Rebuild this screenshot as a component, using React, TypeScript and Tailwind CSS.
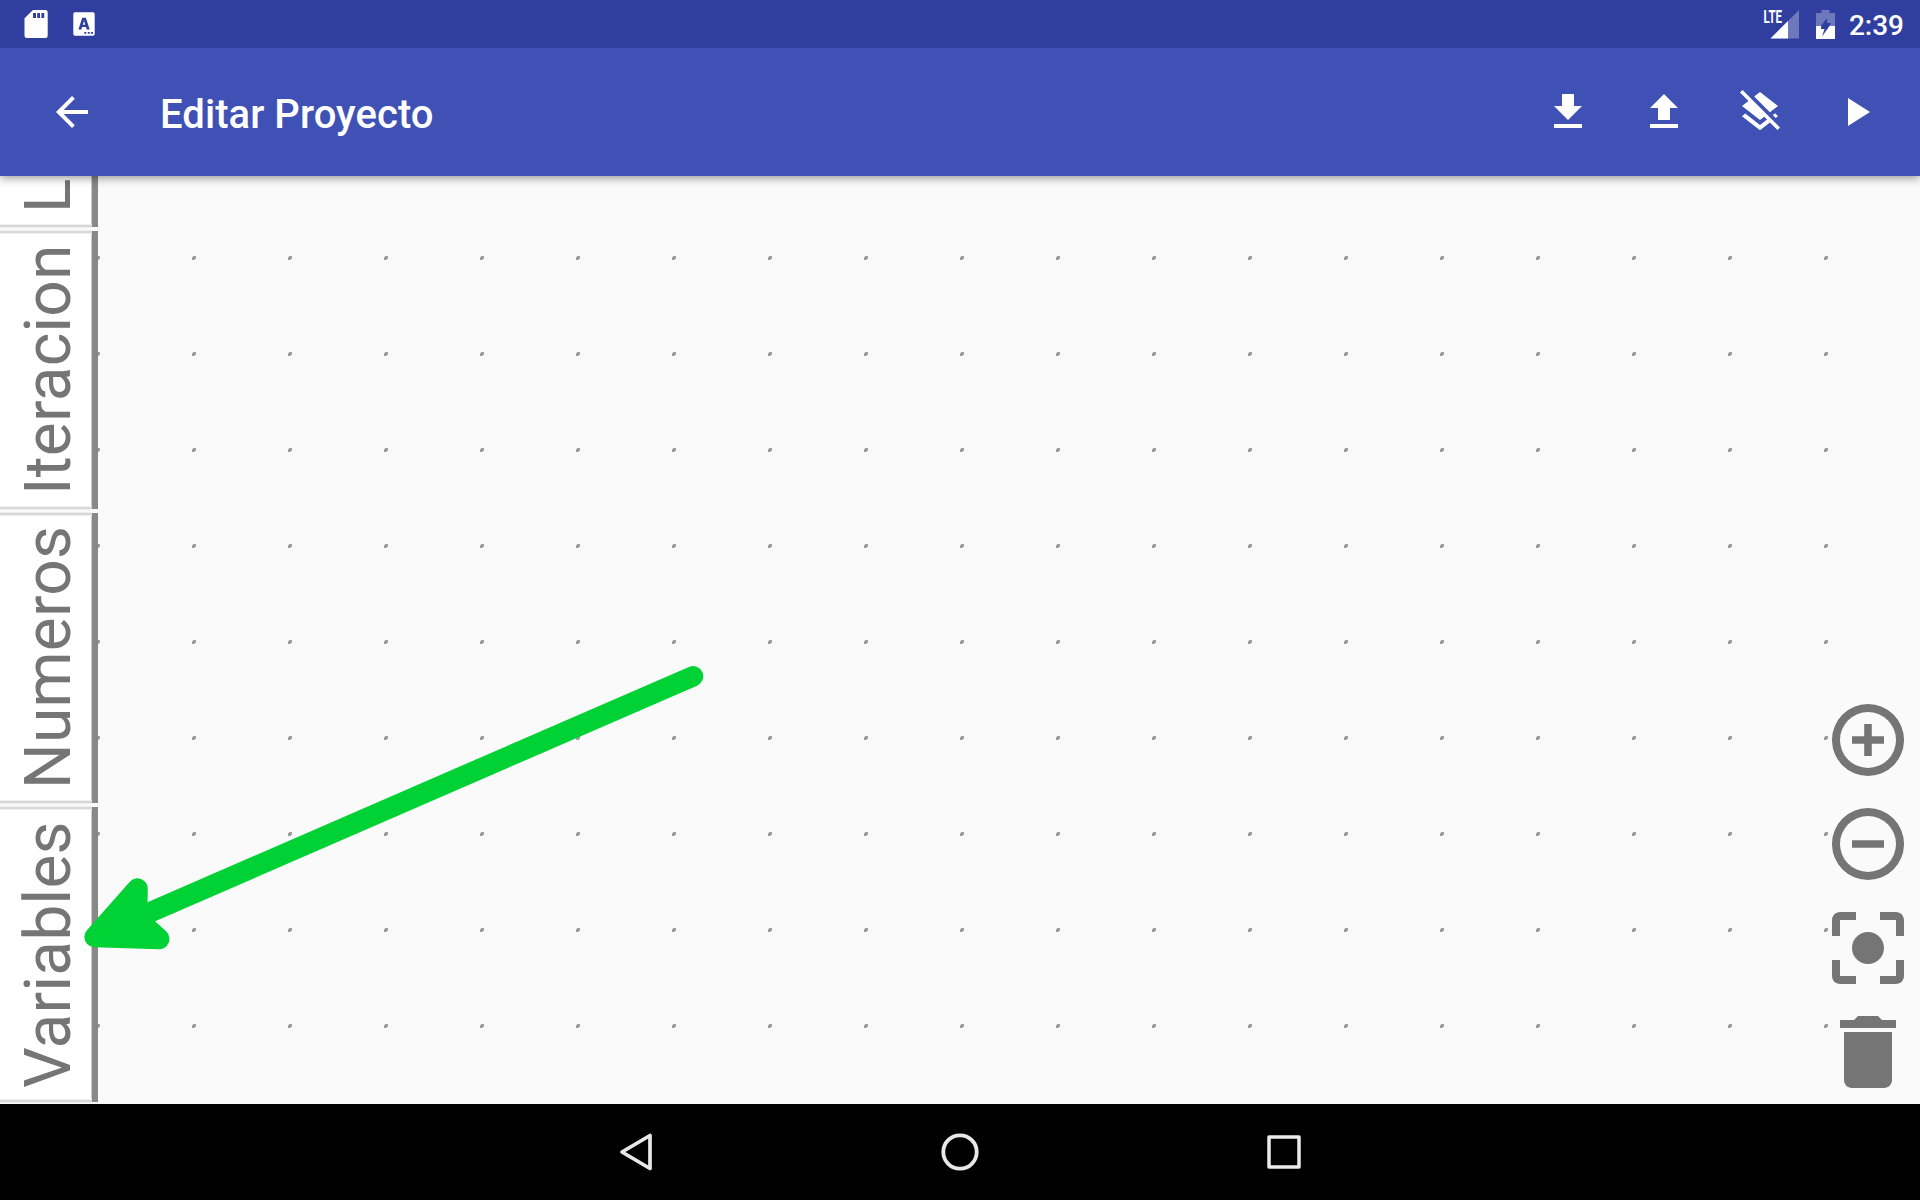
import type { ReactNode } from "react";

const tabs = [
  { label: "Variables", size: "h-[295px]" },
  { label: "Numeros", size: "h-[290px]" },
  { label: "Iteracion", size: "h-[278px]" },
  { label: "Logica", size: "h-[212px]" },
];

function ActionIcon({ d }: { d: string }) {
  return (
    <button className="flex h-24 w-24 items-center justify-center">
      <svg viewBox="0 0 24 24" className="h-12 w-12 fill-white">
        <path d={d} />
      </svg>
    </button>
  );
}

function CanvasButton({ children }: { children: ReactNode }) {
  return (
    <button className="h-[72px] w-[72px]">
      <svg viewBox="3 3 18 18" className="h-[72px] w-[72px] fill-[#757575]">
        {children}
      </svg>
    </button>
  );
}

function StatusBar() {
  return (
    <div className="relative z-30 flex h-12 items-center justify-between bg-[#303f9f] pr-4 pl-6">
      <div className="flex items-center gap-[25px]">
        <svg width="24" height="28" viewBox="0 0 24 28" className="fill-white">
          <path
            fillRule="evenodd"
            d="M9 0h12.500a2.200 2.200 0 0 1 2.200 2.200v23.600a2.200 2.200 0 0 1-2.200 2.200H2.700a2.200 2.200 0 0 1-2.200-2.200V8.300zM9 3v5h3V3zM13.200 3v5h2.800V3zM17.400 3v5h2.800V3z"
          />
        </svg>
        <svg width="22" height="24" viewBox="0 0 22 24" className="fill-white">
          <path
            fillRule="evenodd"
            d="M2 .3h18a1.700 1.700 0 0 1 1.700 1.700v20a1.700 1.700 0 0 1-1.700 1.700H2A1.700 1.700 0 0 1 .3 22V2A1.700 1.700 0 0 1 2 .3zM9.200 5.700L5.400 17.500h3l.8-2.500h3.800l.8 2.500h2.900L12.900 5.700zM11 8.800l1.200 3.900H9.900zM11.300 20v1.800h2V20zM14.800 20v1.800h2V20zM18 20v1.800h2V20z"
          />
        </svg>
      </div>
      <div className="flex items-center">
        <svg width="36" height="29" viewBox="0 0 36 29" className="mr-4 overflow-visible fill-white">
          <path d="M35 0v28.500H6.500z" fillOpacity=".3" />
          <path d="M24 11v17.500H6.500z" />
          <text x="-0.500" y="13" textLength="18.500" lengthAdjust="spacingAndGlyphs" className="font-['Roboto'] text-[18px] font-bold">
            LTE
          </text>
        </svg>
        <svg width="20" height="29" viewBox="0 0 20 29" className="fill-white">
          <path
            fillRule="evenodd"
            fillOpacity=".3"
            d="M5.500 0h8v3H19v13h-5.500l1.500-3h-4V8L5 16H0V3h5.500z"
          />
          <path fillRule="evenodd" d="M0 16h5.200l-.2 3h3.500L6 26.500 13.500 16H19v13H0z" />
        </svg>
        <span className="ml-[13px] pt-[3px] text-[28px] leading-8 font-medium text-white">2:39</span>
      </div>
    </div>
  );
}

function AppBar() {
  return (
    <header className="relative z-20 flex h-32 items-center bg-[#3f51b5] pr-4 pl-12 shadow-[0_2px_9px_rgba(0,0,0,0.42)]">
      <svg viewBox="0 0 24 24" className="h-12 w-12 fill-white">
        <path d="M20 11H7.830l5.590-5.590L12 4l-8 8 8 8 1.410-1.410L7.830 13H20v-2z" />
      </svg>
      <h1 className="ml-16 flex-1 pt-1.5 text-[40px] leading-none font-medium tracking-[0.06px] text-white">Editar Proyecto</h1>
      <ActionIcon d="M19 9h-4V3H9v6H5l7 7 7-7zM5 18v2h14v-2H5z" />
      <ActionIcon d="M9 16h6v-6h4l-7-7-7 7h4zm-4 2h14v2H5z" />
      <ActionIcon d="M19.810 14.990l1.190-.92-1.430-1.430-1.190.92 1.430 1.430zm-.45-4.720L21 9l-9-7-2.910 2.270 7.870 7.880 2.400-1.880zM3.270 1L2 2.270l4.220 4.220L3 9l1.630 1.270L12 16l2.100-1.630 1.430 1.430L12 18.540l-7.370-5.730L3 14.070l9 7 4.950-3.850L20.730 21 22 19.730 3.270 1z" />
      <ActionIcon d="M8 5v14l11-7z" />
    </header>
  );
}

function CategoryTabs() {
  return (
    <nav className="relative flex h-full w-[98px] flex-col-reverse gap-1 overflow-hidden bg-[#fafafa] pb-0.5">
      {tabs.map(({ label, size }) => (
        <div key={label} className={`flex w-[98px] shrink-0 border-r-[6px] border-r-[#888888] ${size}`}>
          <div className="flex flex-1 justify-end border-y-2 border-[#d8d8d8] bg-white py-3 pr-1.5 shadow-[0_1px_#eeeeee,0_-1px_#eeeeee,inset_0_1px_#f0f0f0,inset_0_-1px_#f0f0f0,inset_-1px_0_#cccccc]">
            <span className="rotate-180 text-[64px] leading-[75px] tracking-[0.25px] whitespace-nowrap text-[#757575] [writing-mode:vertical-rl]">
              {label}
            </span>
          </div>
        </div>
      ))}
    </nav>
  );
}

function Workspace() {
  return (
    <main className="relative flex h-[928px] justify-between overflow-hidden bg-[#fafafa]">
      <svg className="absolute inset-0 h-full w-full" shapeRendering="crispEdges">
        <defs>
          <pattern id="grid" width="96" height="96" y="80" patternUnits="userSpaceOnUse">
            <path d="M1 0h3v3H3v1H0V1h1z" fill="#9e9e9e" />
          </pattern>
        </defs>
        <rect width="1920" height="928" fill="url(#grid)" />
      </svg>
      <CategoryTabs />
      <div className="relative flex flex-col justify-end gap-8 p-4">
        <CanvasButton>
          <path
            fillRule="evenodd"
            d="M12 3a9 9 0 1 0 0 18a9 9 0 1 0 0-18zm0 2a7 7 0 1 1 0 14a7 7 0 1 1 0-14zM11.050 8v3.050H8v1.900h3.050V16h1.900v-3.050H16v-1.900h-3.050V8z"
          />
        </CanvasButton>
        <CanvasButton>
          <path
            fillRule="evenodd"
            d="M12 3a9 9 0 1 0 0 18a9 9 0 1 0 0-18zm0 2a7 7 0 1 1 0 14a7 7 0 1 1 0-14zM8 11.050v1.900h8v-1.900z"
          />
        </CanvasButton>
        <CanvasButton>
          <path d="M12 8c-2.210 0-4 1.790-4 4s1.790 4 4 4 4-1.790 4-4-1.790-4-4-4zm-7 7H3v4c0 1.100.9 2 2 2h4v-2H5v-4zM5 5h4V3H5c-1.100 0-2 .9-2 2v4h2V5zm14-2h-4v2h4v4h2V5c0-1.100-.9-2-2-2zm0 16h-4v2h4c1.100 0 2-.9 2-2v-4h-2v4z" />
        </CanvasButton>
        <CanvasButton>
          <path d="M6 19c0 1.100.9 2 2 2h8c1.100 0 2-.9 2-2V7H6v12zM19 4h-3.500l-1-1h-5l-1 1H5v2h14V4z" />
        </CanvasButton>
      </div>
      <svg
        viewBox="0 176 720 800"
        className="absolute top-0 left-0 h-[800px] w-[720px] fill-[#00d235] stroke-[#00d235]"
        strokeWidth="20.500"
        strokeLinecap="round"
        strokeLinejoin="round"
      >
        <path d="M693 676.300L120 925.300" />
        <path d="M94.600 937L137.500 888.600L137 919L159.300 939z" />
      </svg>
    </main>
  );
}

function NavigationBar() {
  return (
    <footer className="flex h-24 items-center justify-center gap-[276px] bg-black">
      <svg width="48" height="48" viewBox="0 0 48 48" className="fill-none stroke-[#e8e8e8]" strokeWidth="3.700" strokeLinejoin="round">
        <path d="M38 7.500v33L10 24z" />
      </svg>
      <svg width="48" height="48" viewBox="0 0 48 48" className="fill-none stroke-[#e8e8e8]" strokeWidth="3.800">
        <circle cx="24" cy="24" r="16.700" />
      </svg>
      <svg width="48" height="48" viewBox="0 0 48 48" className="fill-none stroke-[#ececec]" strokeWidth="3.500" strokeLinejoin="round">
        <rect x="9" y="9" width="30" height="30" />
      </svg>
    </footer>
  );
}

export default function App() {
  return (
    <div className="flex h-[1200px] w-[1920px] flex-col overflow-hidden font-['Roboto',sans-serif]">
      <StatusBar />
      <AppBar />
      <Workspace />
      <NavigationBar />
    </div>
  );
}
